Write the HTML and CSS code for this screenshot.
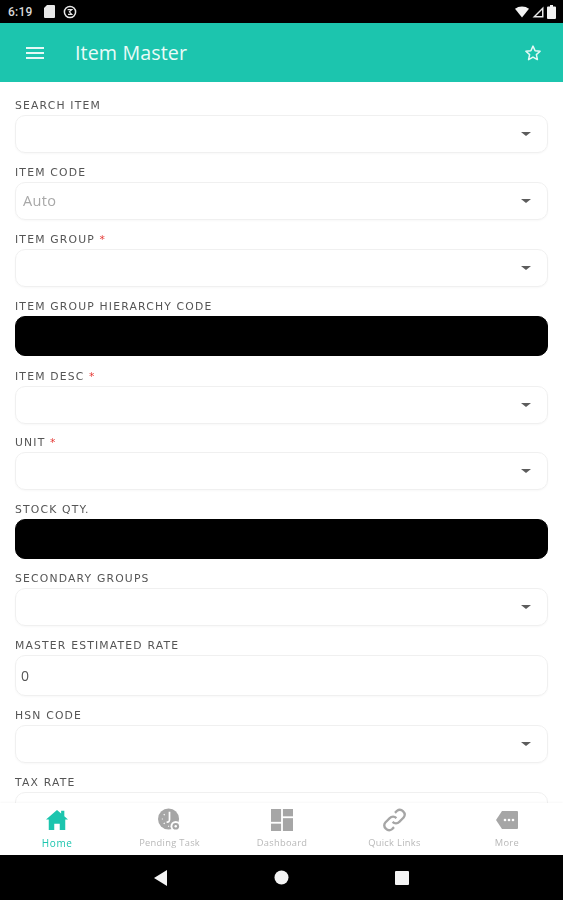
FILE: index.html
```html
<!DOCTYPE html>
<html lang="en">
<head>
<meta charset="utf-8">
<title>Item Master</title>
<link rel="stylesheet" href="styles.css">
</head>
<body>
<div class="screen">
  <div class="status">
    <div class="status-group">
      <span class="time">6:19</span>
      <svg class="s-ico" width="11" height="13" viewBox="0 0 11 13"><path d="M3 0h7a1 1 0 0 1 1 1v11a1 1 0 0 1-1 1H1a1 1 0 0 1-1-1V3z" fill="#e8e8e8"/></svg>
      <svg class="s-ico" width="14" height="14" viewBox="0 0 14 14" fill="none" stroke="#e8e8e8"><circle cx="7" cy="7" r="5.600" stroke-width="1.500"/><path d="M4.600 4.600h4.200l-2.400 2.200 2.400 2.600H5" stroke-width="1.200"/></svg>
    </div>
    <div class="status-group status-right">
      <svg width="14" height="12" viewBox="0 0 15 12"><path d="M0 2.600C2 .9 4.600 0 7.500 0S13 .9 15 2.600L7.500 12z" fill="#f2f2f2"/></svg>
      <svg width="12" height="12" viewBox="0 0 12 12"><path d="M11.500 .5v11H.5zM10 4 4 10h6z" fill="#e8e8e8" fill-rule="evenodd"/></svg>
      <svg width="9" height="14" viewBox="0 0 9 14"><path d="M3 0h3v1.500h2a1 1 0 0 1 1 1V13a1 1 0 0 1-1 1H1a1 1 0 0 1-1-1V2.500a1 1 0 0 1 1-1h2z" fill="#f2f2f2"/></svg>
    </div>
  </div>

  <header class="appbar">
    <svg class="menu" width="18" height="12" viewBox="0 0 18 12" fill="#e6f9f6"><rect width="18" height="2"/><rect y="5" width="18" height="2"/><rect y="10" width="18" height="2"/></svg>
    <h1 class="title">Item Master</h1>
    <svg class="star" width="18" height="18" viewBox="0 0 24 24" fill="none" stroke="#e6f9f6" stroke-width="2" stroke-linejoin="round"><path d="M12 2.800l2.800 6.200 6.700.7-5 4.500 1.400 6.600L12 17.400l-5.900 3.400 1.400-6.600-5-4.500 6.700-.7z"/></svg>
  </header>

  <main class="form">
    <div class="field"><label class="label">SEARCH ITEM</label><div class="box"><span class="caret"></span></div></div>
    <div class="field"><label class="label">ITEM CODE</label><div class="box"><span class="placeholder">Auto</span><span class="caret"></span></div></div>
    <div class="field"><label class="label">ITEM GROUP <i class="req">*</i></label><div class="box"><span class="caret"></span></div></div>
    <div class="field field-wide-gap"><label class="label">ITEM GROUP HIERARCHY CODE</label><div class="box box-black"></div></div>
    <div class="field field-narrow-gap"><label class="label">ITEM DESC <i class="req">*</i></label><div class="box"><span class="caret"></span></div></div>
    <div class="field"><label class="label">UNIT <i class="req">*</i></label><div class="box"><span class="caret"></span></div></div>
    <div class="field"><label class="label">STOCK QTY.</label><div class="box box-black"></div></div>
    <div class="field"><label class="label">SECONDARY GROUPS</label><div class="box"><span class="caret"></span></div></div>
    <div class="field"><label class="label">MASTER ESTIMATED RATE</label><div class="box box-tall"><span class="value">0</span></div></div>
    <div class="field"><label class="label">HSN CODE</label><div class="box"><span class="caret"></span></div></div>
    <div class="field"><label class="label">TAX RATE</label><div class="box"></div></div>
  </main>

  <nav class="tabs">
    <div class="tab tab-active">
      <svg width="22" height="22" viewBox="0 0 24 22"><path d="M12 0l4.500 3.800V1h3.500v5.800L24 10.500h-3V22h-6v-7H9v7H3V10.500H0z" fill="#1cc5ae"/></svg>
      <span class="tab-home">Home</span>
    </div>
    <div class="tab">
      <svg width="23" height="24" viewBox="0 0 24 24"><circle cx="11" cy="11" r="11" fill="#a6a6a6"/><path d="M12 3.500v8c0 2-1 3-3 2.500" stroke="#fff" stroke-width="1.800" fill="none"/><path d="M4 11h1M6 16l1-1M11 19v-1M6 6l1 1" stroke="#fff" stroke-width="1.200"/><circle cx="18.500" cy="18.500" r="5.500" fill="#fff"/><circle cx="18.500" cy="18.500" r="3.500" fill="#a6a6a6"/><circle cx="18.500" cy="18.500" r="1.300" fill="#fff"/></svg>
      <span>Pending Task</span>
    </div>
    <div class="tab">
      <svg width="22" height="24" viewBox="0 0 24 24" fill="#a6a6a6"><rect width="11" height="14"/><rect y="16" width="11" height="8"/><rect x="13" width="11" height="8"/><rect x="13" y="10" width="11" height="14"/></svg>
      <span>Dashboard</span>
    </div>
    <div class="tab">
      <svg width="23" height="24" viewBox="0 0 24 24" fill="none" stroke="#a6a6a6" stroke-width="2.400"><path d="M10 14a5 5 0 0 0 7 0l4.500-4.500a5 5 0 0 0-7-7L12.500 4.500"/><path d="M14 10a5 5 0 0 0-7 0l-4.500 4.500a5 5 0 0 0 7 7l2-2"/></svg>
      <span>Quick Links</span>
    </div>
    <div class="tab">
      <svg width="22" height="24" viewBox="0 0 22 24"><path d="M6 3h15a1 1 0 0 1 1 1v16a1 1 0 0 1-1 1H6l-6-9z" fill="#a6a6a6"/><circle cx="9" cy="12" r="1.300" fill="#fff"/><circle cx="13" cy="12" r="1.300" fill="#fff"/><circle cx="17" cy="12" r="1.300" fill="#fff"/></svg>
      <span>More</span>
    </div>
  </nav>

  <div class="sysnav">
    <svg width="14" height="16" viewBox="0 0 14 16"><path d="M13 0v16L0 8z" fill="#f4f4f4"/></svg>
    <svg width="15" height="15" viewBox="0 0 15 15"><circle cx="7.500" cy="7.500" r="7" fill="#f4f4f4"/></svg>
    <svg width="14" height="14" viewBox="0 0 14 14"><rect width="14" height="14" rx="1" fill="#f4f4f4"/></svg>
  </div>
</div>
</body>
</html>
```
FILE: styles.css
```css
* { box-sizing: border-box; }
html, body { margin: 0; padding: 0; }
body { background: #fff; font-family: Inter, "Liberation Sans", sans-serif; }
.screen { width: 563px; height: 900px; display: flex; flex-direction: column; overflow: hidden; filter: blur(.4px); }

.status { height: 23px; flex: none; background: #000; display: flex; justify-content: space-between; align-items: center; padding: 0 7px 0 8px; }
.status-group { display: flex; align-items: center; gap: 8px; }
.status-right { gap: 3px; }
.time { color: #d8d8d8; font: 500 12px Roboto, sans-serif; letter-spacing: .2px; margin-right: 4px; }

.appbar { height: 59px; flex: none; background: #1cc5ae; display: flex; align-items: center; padding: 0 21px 0 26px; }
.menu { flex: none; }
.title { margin: 0 0 0 31px; flex: 1; color: #eafbf8; font: 500 19.700px "Open Sans", sans-serif; letter-spacing: .1px; }

.form { flex: 1; min-height: 0; overflow: hidden; padding: 15px 15px 0; }
.field { margin-bottom: 11px; }
.field-wide-gap { margin-bottom: 12px; }
.field-narrow-gap { margin-bottom: 10px; }
.label { display: block; height: 18px; line-height: 18px; font-family: "DejaVu Sans", sans-serif; font-size: 10.800px; font-weight: 400; letter-spacing: 1.180px; color: #555; white-space: nowrap; }
.req { color: #e53935; font-style: normal; }
.box { height: 38px; border: 1px solid #f0f0f0; border-radius: 10px; background: #fff; display: flex; align-items: center; justify-content: space-between; padding: 0 16px 0 7px; box-shadow: 0 1px 2px rgba(0,0,0,.03); }
.box-black { height: 40px; background: #000; border-color: #000; box-shadow: none; }
.box-tall { height: 41px; padding-left: 5px; }
.caret { margin-left: auto; width: 0; height: 0; border-left: 5px solid transparent; border-right: 5px solid transparent; border-top: 4px solid #5c5c5c; }
.placeholder { color: #a8a8a8; font: 400 14.500px "Open Sans", sans-serif; letter-spacing: .3px; position: relative; top: -1px; }
.value { color: #555; font: 400 14px "Open Sans", sans-serif; letter-spacing: .3px; }

.tabs { height: 52px; flex: none; background: #fff; display: flex; padding: 5px 0 0 1px; box-shadow: 0 -1px 2px rgba(0,0,0,.03); position: relative; }
.tab { width: 112.500px; display: flex; flex-direction: column; align-items: center; justify-content: flex-start; color: #b8b8b8; font: 400 9.300px "Open Sans", sans-serif; letter-spacing: .3px; height: 47px; }
.tab svg { height: 24px; flex: none; }
.tab span { margin-top: 5px; line-height: 12px; white-space: nowrap; }
.tab-active { color: #1cc5ae; }
.tab-home { font-size: 10px; letter-spacing: .6px; }

.sysnav { height: 45px; flex: none; background: #000; display: flex; align-items: center; justify-content: center; gap: 106px; }
```
